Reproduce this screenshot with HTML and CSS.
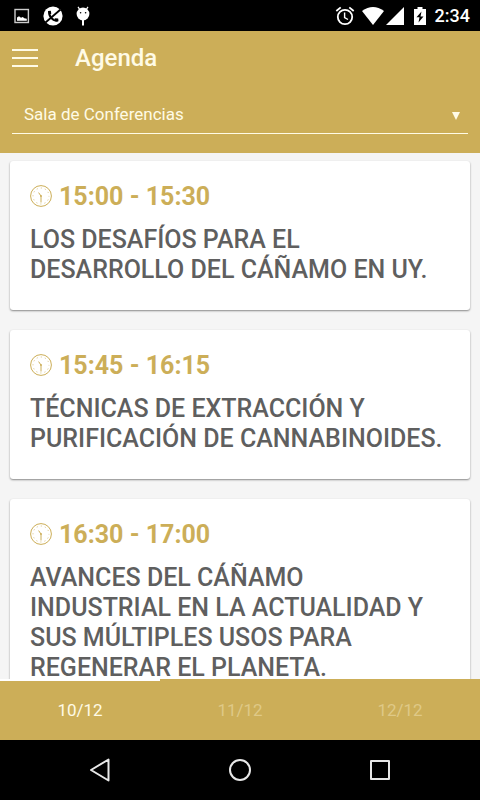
FILE: index.html
```html
<!DOCTYPE html>
<html lang="es">
<head>
    <meta charset="UTF-8">
    <meta name="viewport" content="width=device-width, initial-scale=1.0">
    <title>Agenda</title>
    <link rel="stylesheet" href="styles.css">
</head>
<body>
    <svg class="sprite" aria-hidden="true">
        <symbol id="clock" viewBox="0 0 22 22">
            <circle cx="11" cy="11" r="10.4" fill="none" stroke="currentColor" stroke-width="1"/>
            <circle cx="11" cy="11" r="8" fill="none" stroke="currentColor" stroke-width="1" stroke-dasharray="0.8 3.389" stroke-dashoffset="0.4"/>
            <path d="M11 17.5V11L8.6 7.6" fill="none" stroke="currentColor" stroke-width="1"/>
            <circle cx="11" cy="11" r="0.9" fill="currentColor"/>
        </symbol>
    </svg>

    <div class="status-bar">
        <div class="status-icons">
            <svg width="16" height="16" viewBox="0 0 16 16">
                <rect x="1" y="1.5" width="13.4" height="13" fill="none" stroke="#ccc" stroke-width="1.4"/>
                <path d="M3 12.8V9.5L5 8.2l2 1.6 1.8-.8 1.5 1.2 2.5.6v2z" fill="#fff"/>
            </svg>
            <svg width="20" height="20" viewBox="0 0 20 20">
                <circle cx="10" cy="10" r="9.6" fill="#fff"/>
                <path d="M6.2 5.2c-.8 4.8 3.4 9.6 8.4 9.5" fill="none" stroke="#000" stroke-width="2"/>
                <path d="M5 5l2.8-.2.5 3-2 .8zM11.6 12.2l3.6.3.3 2.8-3 .2z"/>
                <path d="M2.5 16.5L17.5 3.5" stroke="#000" stroke-width="1.8"/>
            </svg>
            <svg width="14" height="20" viewBox="1 0 14 20">
                <path d="M3 .8l2 3M13 .8l-2 3" stroke="#fff" stroke-width="1.2"/>
                <circle cx="8" cy="8" r="6.4" fill="#fff"/>
                <path d="M8 13v6.4" stroke="#fff" stroke-width="2"/>
                <circle cx="5.6" cy="6.8" r=".8"/>
                <circle cx="10.6" cy="6.8" r=".8"/>
            </svg>
        </div>
        <div class="status-icons status-right">
            <svg width="20" height="20" viewBox="0 0 20 20" fill="none" stroke="#fff">
                <circle cx="10" cy="11" r="7.2" stroke-width="1.8"/>
                <path d="M1.3 5L5.7 1.4M18.7 5l-4.4-3.6" stroke-width="1.8"/>
                <path d="M9.6 6.5v5l3.4 2" stroke-width="1.4"/>
            </svg>
            <svg class="wifi" width="22" height="18" viewBox="0 0 22 18">
                <path d="M0 4Q11-4 22 4L11 18z" fill="#fff"/>
            </svg>
            <svg class="signal" width="18" height="18" viewBox="0 0 18 18">
                <path d="M18 0v18H0z" fill="#fff"/>
            </svg>
            <svg class="battery" width="12" height="18" viewBox="0 0 12 18">
                <path d="M0 2h3.5V0h5v2H12v16H0z" fill="#fff"/>
                <path d="M7.5 4.5L2.5 10.3h3L4.5 15.5l5-6h-3z"/>
            </svg>
            <span class="status-time">2:34</span>
        </div>
    </div>

    <header class="header">
        <div class="toolbar">
            <button class="menu-button" type="button" aria-label="Menú">
                <svg width="26" height="18" viewBox="0 0 26 18">
                    <path d="M0 1h26M0 9h26M0 17h26" stroke="#fffbe6" stroke-width="2"/>
                </svg>
            </button>
            <h1>Agenda</h1>
        </div>
        <div class="room">
            <select class="room-select" aria-label="Sala">
                <option>Sala de Conferencias</option>
            </select>
            <svg class="room-arrow" width="8" height="8" viewBox="0 0 8 8">
                <path d="M0 0h8L4 8z" fill="#fffbe6"/>
            </svg>
        </div>
    </header>

    <main class="agenda">
        <article class="card">
            <p class="card-time"><svg width="22" height="22"><use href="#clock"/></svg>15:00 - 15:30</p>
            <h2>LOS DESAFÍOS PARA EL DESARROLLO DEL CÁÑAMO EN UY.</h2>
        </article>
        <article class="card">
            <p class="card-time"><svg width="22" height="22"><use href="#clock"/></svg>15:45 - 16:15</p>
            <h2>TÉCNICAS DE EXTRACCIÓN Y PURIFICACIÓN DE CANNABINOIDES.</h2>
        </article>
        <article class="card">
            <p class="card-time"><svg width="22" height="22"><use href="#clock"/></svg>16:30 - 17:00</p>
            <h2>AVANCES DEL CÁÑAMO INDUSTRIAL EN LA ACTUALIDAD Y SUS MÚLTIPLES USOS PARA REGENERAR EL PLANETA.</h2>
        </article>
    </main>

    <nav class="tabs">
        <a class="tab active" href="#">10/12</a>
        <a class="tab" href="#">11/12</a>
        <a class="tab" href="#">12/12</a>
    </nav>

    <div class="nav-bar">
        <button type="button" aria-label="Atrás">
            <svg width="24" height="24" viewBox="0 0 24 24">
                <path d="M20.5 1.5v21L3 12z"/>
            </svg>
        </button>
        <button type="button" aria-label="Inicio">
            <svg width="24" height="24" viewBox="0 0 24 24">
                <circle cx="12" cy="12" r="10"/>
            </svg>
        </button>
        <button type="button" aria-label="Recientes">
            <svg width="24" height="24" viewBox="0 0 24 24">
                <rect x="3" y="3" width="18" height="18"/>
            </svg>
        </button>
    </div>
</body>
</html>
```
FILE: styles.css
```css
* {
    box-sizing: border-box;
}
body {
    display: flex;
    flex-direction: column;
    height: 100vh;
    margin: 0;
    font-family: Roboto, sans-serif;
    background-color: #f5f5f5;
    color: #5f5f5f;
}
h1,
h2,
p {
    margin: 0;
}
svg {
    display: block;
    flex: none;
}
button {
    display: flex;
    padding: 0;
    border: none;
    background: none;
    cursor: pointer;
}
.sprite {
    position: absolute;
    width: 0;
    height: 0;
}
.status-bar {
    display: flex;
    flex: none;
    align-items: center;
    justify-content: space-between;
    height: 31px;
    padding: 0 10px 0 14px;
    background-color: #000;
    color: #fff;
}
.status-icons {
    display: flex;
    align-items: center;
    gap: 13px;
}
.status-right {
    gap: 0;
}
.wifi {
    margin-left: 7px;
}
.signal {
    margin-left: 2px;
}
.battery {
    margin: 0 9px 0 10px;
}
.status-time {
    font-size: 18px;
    font-weight: 500;
    line-height: 31px;
}
.header {
    flex: none;
    padding: 0 12px 19px;
    background-color: #ccae58;
    color: #fffbe6;
}
.toolbar {
    display: flex;
    align-items: center;
    gap: 37px;
    height: 54px;
}
h1 {
    font-size: 24px;
    font-weight: 500;
    line-height: 32px;
}
.room {
    position: relative;
    margin-top: 10px;
}
.room-select {
    display: block;
    width: 100%;
    height: 39px;
    padding: 0 30px 0 12px;
    border: none;
    border-bottom: 1px solid #fffbe6;
    border-radius: 0;
    background: none;
    color: inherit;
    font-family: inherit;
    font-size: 17px;
    appearance: none;
}
.room-arrow {
    position: absolute;
    top: 17px;
    right: 8px;
    pointer-events: none;
}
.agenda {
    display: flex;
    flex: 1;
    flex-direction: column;
    gap: 20px;
    min-height: 0;
    padding: 8px 10px;
    overflow-y: auto;
    scrollbar-width: none;
}
.card {
    flex: none;
    padding: 21px 20px 25px;
    border-radius: 3px;
    background-color: #fff;
    box-shadow: 0 1px 2px rgba(0, 0, 0, 0.45);
}
.card-time {
    display: flex;
    align-items: center;
    gap: 7px;
    color: #ccae58;
    font-size: 25px;
    font-weight: 700;
    line-height: 30px;
}
.card-time svg {
    margin-bottom: 2px;
}
.card h2 {
    margin-top: 13px;
    font-size: 25px;
    font-weight: 500;
    line-height: 30px;
}
.tabs {
    display: flex;
    flex: none;
    height: 61px;
    background-color: #ccae58;
}
.tab {
    flex: 1;
    border-top: 2px solid transparent;
    color: #dfc987;
    font-size: 17px;
    line-height: 59px;
    text-align: center;
    text-decoration: none;
}
.tab.active {
    border-top-color: #fff;
    color: #fffbe6;
}
.nav-bar {
    display: flex;
    flex: none;
    align-items: center;
    justify-content: center;
    gap: 116px;
    height: 60px;
    background-color: #000;
}
.nav-bar svg {
    fill: none;
    stroke: #e8e8e8;
    stroke-width: 2;
    stroke-linejoin: round;
}
```
